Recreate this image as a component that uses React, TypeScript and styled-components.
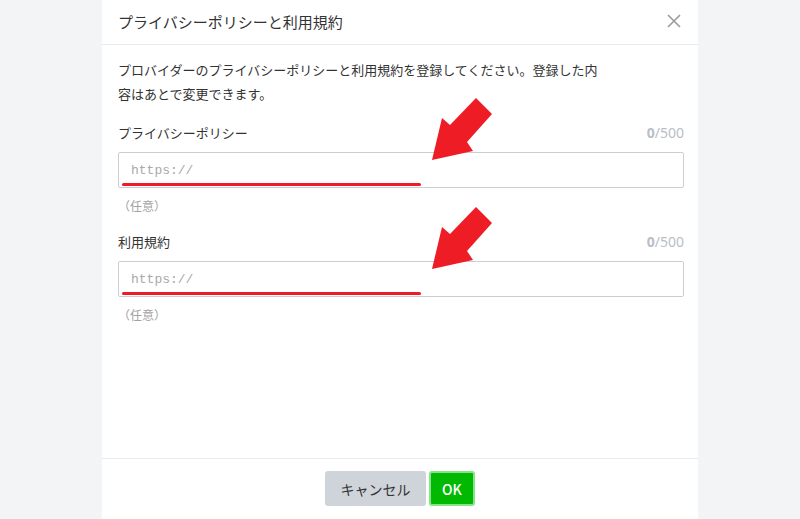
import styled, { createGlobalStyle } from 'styled-components';

const GlobalStyle = createGlobalStyle`
  html, body {
    margin: 0;
    padding: 0;
    background: #f3f4f6;
  }
  body {
    font-family: "Noto Sans CJK JP", "Noto Sans", sans-serif;
    color: #333;
  }
`

const Dialog = styled.div`
  width: 596px;
  height: 519px;
  margin: 0 auto;
  background: #fff;
  display: flex;
  flex-direction: column;
`

const Header = styled.div`
  height: 44px;
  padding: 0 16px;
  border-bottom: 1px solid #e9eaec;
  display: flex;
  align-items: center;
  justify-content: space-between;
`

const Title = styled.h2`
  margin: 0;
  font-size: 15px;
  font-weight: 400;
  color: #333;
  line-height: 1;
  margin-top: -2px;
`

const CloseButton = styled.button`
  border: none;
  background: none;
  padding: 0;
  width: 18px;
  height: 18px;
  margin-right: -1px;
  margin-top: -2px;
  display: flex;
  align-items: center;
  justify-content: center;
  cursor: pointer;
`

const Body = styled.div`
  flex: 1;
  padding: 13px 14px 0 16px;
`

const Description = styled.p`
  margin: 0;
  font-size: 13px;
  line-height: 24px;
  color: #333;
`

const Field = styled.div<{ $first?: boolean }>`
  position: relative;
  margin-top: 16px;
`

const LabelRow = styled.div`
  display: flex;
  justify-content: space-between;
  align-items: center;
  height: 20px;
  font-size: 13px;
`

const Label = styled.label`
  color: #333;
`

const Counter = styled.span`
  color: #b9bec6;
  font-family: "Noto Sans", sans-serif;
  font-size: 14px;
  b {
    font-weight: 700;
  }
`

const Input = styled.input`
  box-sizing: border-box;
  display: block;
  width: 100%;
  height: 36px;
  margin-top: 10px;
  padding: 0 12px;
  border: 1px solid #caced5;
  border-radius: 2px;
  font-family: "Liberation Mono", "DejaVu Sans Mono", monospace;
  font-size: 13px;
  outline: none;
  &::placeholder {
    color: #a9a9a9;
  }
`

const Note = styled.div`
  margin-top: 9px;
  font-size: 12px;
  line-height: 18px;
  color: #a3a3a3;
`

const Underline = styled.span`
  position: absolute;
  left: 4px;
  top: 61px;
  width: 299px;
  height: 3px;
  border-radius: 2px;
  background: #ee1c25;
`

const Arrow = styled.svg`
  position: absolute;
  left: 312px;
  top: -26px;
  overflow: visible;
`

const Footer = styled.div`
  border-top: 1px solid #e9eaec;
  height: 61px;
  padding-top: 12px;
  box-sizing: border-box;
  display: flex;
  justify-content: center;
  gap: 3px;
`

const Button = styled.button<{ $primary?: boolean }>`
  box-sizing: border-box;
  height: 35px;
  padding: 0;
  border-radius: 3px;
  font-family: "Noto Sans CJK JP", "Noto Sans", sans-serif;
  font-size: 14px;
  cursor: pointer;
  background: ${p => (p.$primary ? '#00b900' : '#cfd3da')};
  color: ${p => (p.$primary ? '#fff' : '#333')};
  font-weight: ${p => (p.$primary ? 500 : 400)};
  border: ${p => (p.$primary ? '2px solid #86e38a' : 'none')};
  width: ${p => (p.$primary ? '46px' : '101px')};
`

const RedArrow = () => (
  <Arrow width="84" height="66" viewBox="0 0 84 66">
    <polygon
      points="2,64 12,22 20,29 46,2 62,18 37,46 43,55"
      fill="#ee1c25"
    />
  </Arrow>
)

const CloseIcon = () => (
  <svg width="14" height="14" viewBox="0 0 14 14">
    <path d="M1 1L13 13M13 1L1 13" stroke="#9a9a9a" strokeWidth="1.6" />
  </svg>
)

interface UrlFieldProps {
  label: string
}

const UrlField = (props: UrlFieldProps) => (
  <Field>
    <LabelRow>
      <Label>{props.label}</Label>
      <Counter><b>0</b>/500</Counter>
    </LabelRow>
    <Input placeholder="https://" />
    <Note>（任意）</Note>
    <Underline />
    <RedArrow />
  </Field>
)

export default function App() {
  return <>
    <GlobalStyle />
    <Dialog>
      <Header>
        <Title>プライバシーポリシーと利用規約</Title>
        <CloseButton aria-label="close"><CloseIcon /></CloseButton>
      </Header>
      <Body>
        <Description>
          プロバイダーのプライバシーポリシーと利用規約を登録してください。登録した内<br />
          容はあとで変更できます。
        </Description>
        <UrlField label="プライバシーポリシー" />
        <UrlField label="利用規約" />
      </Body>
      <Footer>
        <Button>キャンセル</Button>
        <Button $primary>OK</Button>
      </Footer>
    </Dialog>
  </>
}
